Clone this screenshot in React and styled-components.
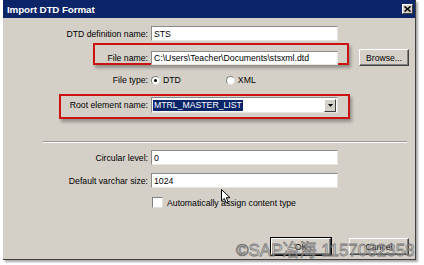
import React from "react";
import styled, { createGlobalStyle } from "styled-components";

const Global = createGlobalStyle`
  html, body { margin: 0; padding: 0; background: #ffffff; }
  body { font-family: "Liberation Sans", Arial, sans-serif; }
  * { box-sizing: border-box; }
`;

const Page = styled.div`
  width: 424px;
  height: 265px;
  padding-left: 3px;
  overflow: hidden;
  background: #ffffff;
`;

const Dialog = styled.div`
  position: relative;
  width: 413px;
  height: 260px;
  background: #d4d0c8;
  border-right: 1px solid #404040;
  border-bottom: 1px solid #404040;
  box-shadow: 2px 2px 2px rgba(0, 0, 0, 0.35);
  display: flex;
  flex-direction: column;
  overflow: hidden;
`;

const TitleBar = styled.div`
  height: 18px;
  background: #0c2468;
  display: flex;
  align-items: center;
  justify-content: space-between;
  padding: 0 2px 0 4px;
`;

const Title = styled.span`
  color: #ffffff;
  font-weight: bold;
  font-size: 9.8px;
  letter-spacing: -0.1px;
`;

const CloseBtn = styled.div`
  width: 11px;
  height: 10px;
  background: #d4d0c8;
  border-top: 1px solid #ffffff;
  border-left: 1px solid #ffffff;
  border-right: 1px solid #404040;
  border-bottom: 1px solid #404040;
  display: flex;
  align-items: center;
  justify-content: center;
`;

const Content = styled.div`
  display: flex;
  flex-direction: column;
  padding-top: 8px;
  font-size: 8.7px;
  color: #000;
`;

const Row = styled.div`
  position: relative;
  display: grid;
  grid-template-columns: 145px 187px auto;
  column-gap: 3px;
  align-items: center;
  height: ${(p) => p.$h}px;
  margin-top: ${(p) => p.$mt || 0}px;
`;

const Label = styled.span`
  text-align: right;
  white-space: nowrap;
`;

const Field = styled.div`
  height: ${(p) => p.$h || 15}px;
  background: #ffffff;
  border-top: 1px solid #8a8a8a;
  border-left: 1px solid #8a8a8a;
  border-right: 1px solid #e8e6e0;
  border-bottom: 1px solid #e8e6e0;
  display: flex;
  align-items: center;
  padding-left: 2px;
  white-space: nowrap;
  overflow: hidden;
  position: relative;
`;

const Mark = styled.div`
  position: absolute;
  left: ${(p) => p.$l}px;
  right: ${(p) => p.$r}px;
  top: ${(p) => p.$t}px;
  bottom: ${(p) => p.$b}px;
  border: 2px solid #cc1111;
  box-shadow: 2px 3px 3px rgba(0, 0, 0, 0.3);
  pointer-events: none;
`;

const Button = styled.div`
  width: 60px;
  height: 17px;
  background: #d4d0c8;
  border-top: 1px solid #ffffff;
  border-left: 1px solid #ffffff;
  border-right: 1px solid #404040;
  border-bottom: 1px solid #404040;
  box-shadow: inset -1px -1px 0 #808080;
  outline: ${(p) => (p.$default ? "1px solid #000" : "none")};
  display: flex;
  align-items: center;
  justify-content: center;
  font-size: 8.6px;
  color: #000;
`;

const BrowseButton = styled(Button)`
  width: 50px;
  margin-left: 18px;
`;

const RadioGroup = styled.div`
  display: flex;
  align-items: center;
`;

const RadioItem = styled.label`
  display: flex;
  align-items: center;
  gap: 3px;
  margin-left: ${(p) => p.$ml || 0}px;
`;

const Radio = styled.span`
  width: 9px;
  height: 9px;
  border-radius: 50%;
  background: #fff;
  border: 1px solid #808080;
  border-right-color: #e0ded8;
  border-bottom-color: #e0ded8;
  display: flex;
  align-items: center;
  justify-content: center;
  &::after {
    content: "";
    width: 3px;
    height: 3px;
    border-radius: 50%;
    background: ${(p) => (p.$on ? "#000" : "transparent")};
  }
`;

const Select = styled(Field)`
  justify-content: space-between;
  padding: 1px;
`;

const Selected = styled.span`
  background: #0a246a;
  color: #fff;
  padding: 0 1px;
  line-height: 11px;
`;

const DropBtn = styled.div`
  width: 12px;
  height: 13px;
  background: #d4d0c8;
  border-top: 1px solid #ffffff;
  border-left: 1px solid #ffffff;
  border-right: 1px solid #404040;
  border-bottom: 1px solid #404040;
  display: flex;
  align-items: center;
  justify-content: center;
`;

const Separator = styled.div`
  margin: 28px 8px 0 40px;
  height: 2px;
  border-top: 1px solid #9a9892;
  border-bottom: 1px solid #ffffff;
`;

const CheckRow = styled.div`
  display: flex;
  align-items: center;
  gap: 4px;
  margin: ${(p) => p.$mt}px 0 0 149px;
  height: 11px;
`;

const Check = styled.span`
  width: 11px;
  height: 11px;
  background: #fff;
  border: 1px solid #808080;
  border-right-color: #e0ded8;
  border-bottom-color: #e0ded8;
`;

const Buttons = styled.div`
  display: flex;
  justify-content: flex-end;
  gap: 18px;
  padding-right: 6px;
  margin-top: 30px;
`;

const Watermark = styled.div`
  position: absolute;
  left: 233px;
  top: 236px;
  font-family: "Liberation Sans", "Noto Sans CJK SC", sans-serif;
  font-size: 17px;
  white-space: nowrap;
  color: rgba(255, 255, 255, 0.4);
  -webkit-text-stroke: 0.8px rgba(105, 105, 105, 0.85);
  pointer-events: none;
`;

const Cursor = styled.svg`
  position: absolute;
  left: 218px;
  top: 189px;
`;

export default function App() {
  return (
    <Page>
      <Global />
      <Dialog>
        <TitleBar>
          <Title>Import DTD Format</Title>
          <CloseBtn>
            <svg width="7" height="6" viewBox="0 0 7 6">
              <path d="M0.5 0.5 L6.5 5.5 M6.5 0.5 L0.5 5.5" stroke="#000" strokeWidth="1.6" />
            </svg>
          </CloseBtn>
        </TitleBar>
        <Content>
          <Row $h={15}>
            <Label>DTD definition name:</Label>
            <Field>STS</Field>
          </Row>
          <Row $h={17} $mt={8}>
            <Mark $l={90} $r={66} $t={-6} $b={1} />
            <Label>File name:</Label>
            <Field $h={14}>C:\Users\Teacher\Documents\stsxml.dtd</Field>
            <BrowseButton>Browse...</BrowseButton>
          </Row>
          <Row $h={14} $mt={7}>
            <Label>File type:</Label>
            <RadioGroup>
              <RadioItem>
                <Radio $on />
                <span>DTD</span>
              </RadioItem>
              <RadioItem $ml={45}>
                <Radio />
                <span>XML</span>
              </RadioItem>
            </RadioGroup>
          </Row>
          <Row $h={16} $mt={10}>
            <Mark $l={56} $r={65} $t={-3} $b={-6} />
            <Label>Root element name:</Label>
            <Select $h={16}>
              <Selected>MTRL_MASTER_LIST</Selected>
              <DropBtn>
                <svg width="5" height="3" viewBox="0 0 5 3">
                  <path d="M0 0 H5 L2.5 3 Z" fill="#000" />
                </svg>
              </DropBtn>
            </Select>
          </Row>
          <Separator />
          <Row $h={15} $mt={7}>
            <Label>Circular level:</Label>
            <Field>0</Field>
          </Row>
          <Row $h={15} $mt={8}>
            <Label>Default varchar size:</Label>
            <Field>1024</Field>
          </Row>
          <CheckRow $mt={9}>
            <Check />
            <span>Automatically assign content type</span>
          </CheckRow>
          <Buttons>
            <Button $default>OK</Button>
            <Button>Cancel</Button>
          </Buttons>
        </Content>
        <Watermark>©SAP冶海 1157082358</Watermark>
        <Cursor width="11" height="16" viewBox="0 0 11 16">
          <path d="M0.5 0.5 L0.5 12 L3.3 9.4 L5.3 14 L7.2 13.2 L5.3 8.7 L9 8.7 Z" fill="#fff" stroke="#000" strokeWidth="1" />
        </Cursor>
      </Dialog>
    </Page>
  );
}
